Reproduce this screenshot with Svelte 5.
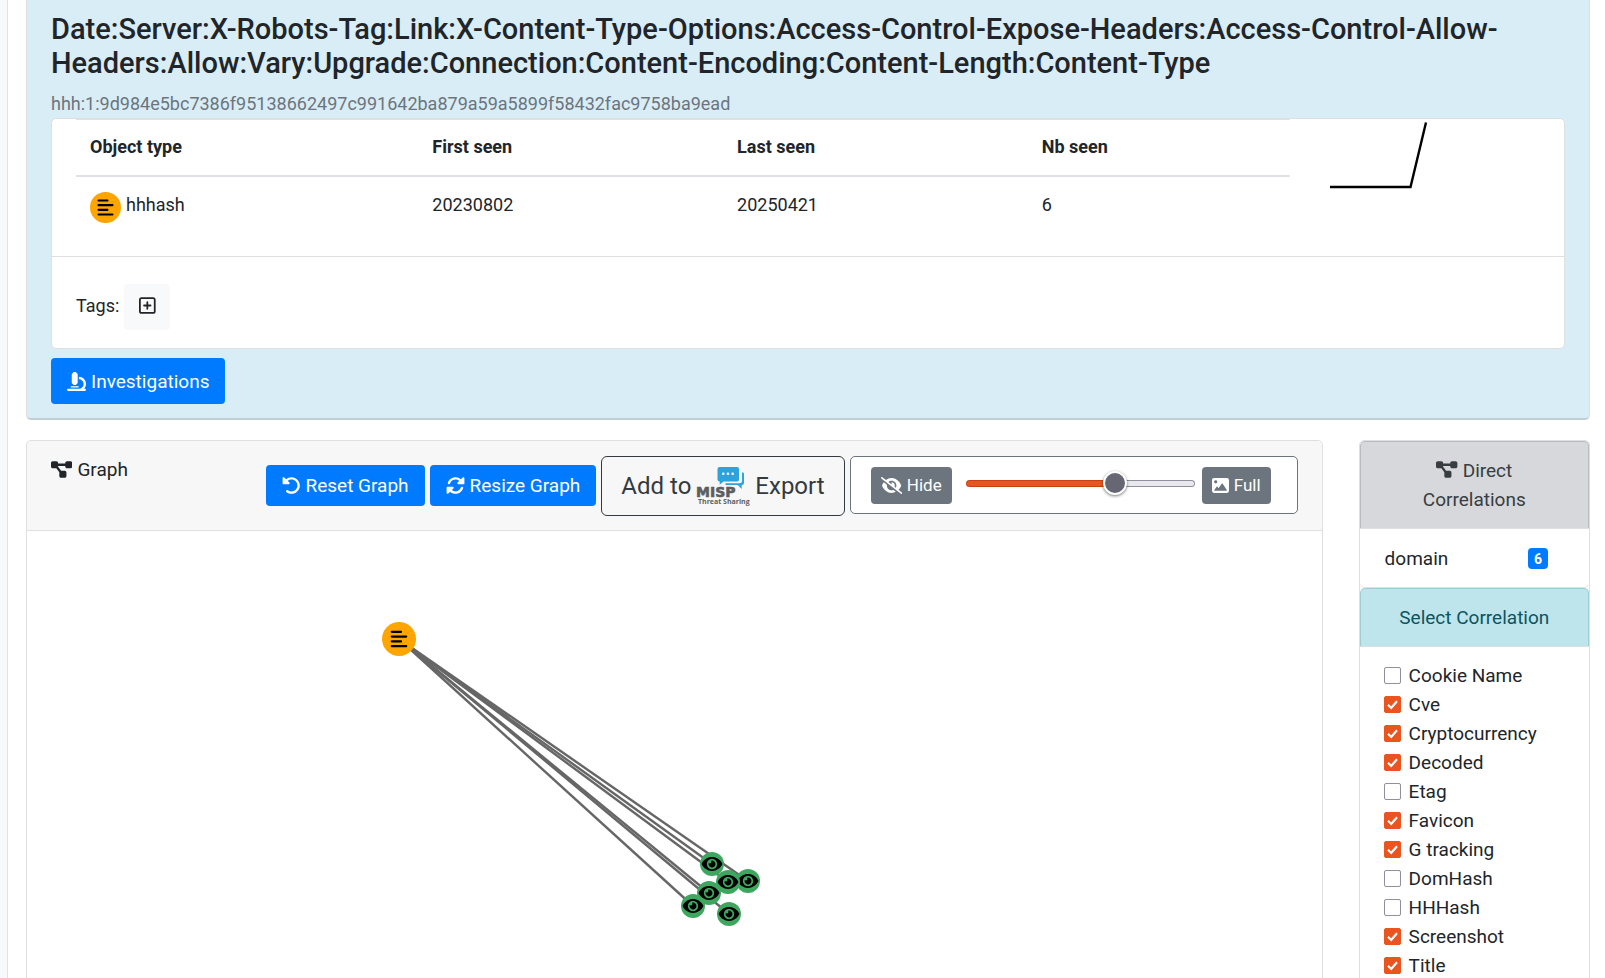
<script>
  const icons = {
    diagram: [576, 'M0 80C0 53.5 21.5 32 48 32h96c26.5 0 48 21.5 48 48V96H384V80c0-26.5 21.5-48 48-48h96c26.5 0 48 21.5 48 48v96c0 26.5-21.5 48-48 48H432c-26.5 0-48-21.5-48-48V160H192v16c0 1.7-.1 3.4-.3 5L272 288h96c26.5 0 48 21.5 48 48v96c0 26.5-21.5 48-48 48H272c-26.5 0-48-21.5-48-48V336c0-1.7 .1-3.4 .3-5L144 224H48c-26.5 0-48-21.5-48-48V80z'],
    microscope: [512, 'M160 32c0-17.7 14.3-32 32-32h32c17.7 0 32 14.3 32 32c17.7 0 32 14.3 32 32V288c0 17.7-14.3 32-32 32c0 17.7-14.3 32-32 32H192c-17.7 0-32-14.3-32-32c-17.7 0-32-14.3-32-32V64c0-17.7 14.3-32 32-32zM32 448H320c70.7 0 128-57.3 128-128s-57.3-128-128-128V128c106 0 192 86 192 192c0 49.2-18.5 94-48.9 128H480c17.7 0 32 14.3 32 32s-14.3 32-32 32H320 32c-17.7 0-32-14.3-32-32s14.3-32 32-32zm80-64H304c8.8 0 16 7.2 16 16s-7.2 16-16 16H112c-8.8 0-16-7.2-16-16s7.2-16 16-16z'],
    undo: [512, 'M480 256c0 123.4-100.5 223.9-223.9 223.9c-48.84 0-95.17-15.58-134.2-44.86c-14.12-10.59-16.97-30.66-6.375-44.81c10.59-14.12 30.62-16.94 44.81-6.375c27.84 20.91 61 31.94 95.88 31.94C344.3 415.8 416 344.1 416 256s-71.69-159.8-159.8-159.8c-37.46 0-73.09 13.49-101.3 36.64l45.12 45.14c17.01 17.02 4.955 46.1-19.1 46.1H35.17C24.58 224.1 16 215.5 16 204.9V59.04c0-24.04 29.07-36.08 46.07-19.07l47.6 47.63C149.9 52.71 201.5 32.11 256.1 32.11C379.5 32.11 480 132.6 480 256z'],
    sync: [512, 'M449.9 39.96l-48.5 48.53C362.5 53.19 311.4 32 256 32C161.5 32 78.59 92.34 49.58 182.2c-5.438 16.81 3.797 34.88 20.61 40.28c16.97 5.5 34.86-3.812 40.3-20.59C130.9 138.5 189.4 96 256 96c37.96 0 73 14.18 100.2 37.8L311.1 178C295.1 194.8 306.8 223.4 330.4 224h146.9C487.7 223.7 496 215.3 496 204.9V59.04C496 34.99 466.9 22.95 449.9 39.96zM441.8 289.6c-16.94-5.438-34.88 3.812-40.3 20.59C381.1 373.5 322.6 416 256 416c-37.96 0-73-14.18-100.2-37.8L200 334C216.9 317.2 205.2 288.6 181.6 288H34.66C24.32 288.3 16 296.7 16 307.1v145.9c0 24.04 29.07 36.08 46.07 19.07l48.5-48.53C149.5 458.8 200.6 480 255.1 480c94.45 0 177.4-60.34 206.4-150.2C467.9 313 458.6 294.1 441.8 289.6z'],
    eyeSlash: [640, 'M38.8 5.1C28.4-3.1 13.3-1.2 5.1 9.2S-1.2 34.7 9.2 42.9l592 464c10.4 8.2 25.5 6.3 33.7-4.1s6.3-25.5-4.1-33.7L525.6 386.7c39.6-40.6 66.4-86.1 79.9-118.4c3.3-7.9 3.3-16.7 0-24.6c-14.9-35.7-46.2-87.7-93-131.1C465.5 68.8 400.8 32 320 32c-68.2 0-125 26.3-169.3 60.8L38.8 5.1zM223.1 149.5C248.6 126.2 282.7 112 320 112c79.5 0 144 64.5 144 144c0 24.9-6.3 48.3-17.4 68.7L408 294.5c8.4-19.3 10.6-41.4 4.8-63.3c-11.1-41.5-47.8-69.4-88.6-71.1c-5.8-.2-9.2 6.1-7.4 11.7c2.1 6.4 3.3 13.2 3.3 20.3c0 10.2-2.4 19.8-6.6 28.3l-90.3-70.8zM373 389.9c-16.4 6.5-34.3 10.1-53 10.1c-79.5 0-144-64.5-144-144c0-6.9 .5-13.6 1.4-20.2L83.1 161.5C60.3 191.2 44 220.8 34.5 243.7c-3.3 7.9-3.3 16.7 0 24.6c14.9 35.7 46.2 87.7 93 131.1C174.5 443.2 239.2 480 320 480c47.8 0 89.9-12.9 126.2-32.5L373 389.9z'],
    image: [512, 'M447.1 32h-384C28.64 32-.0091 60.65-.0091 96v320c0 35.35 28.65 64 63.1 64h384c35.35 0 64-28.65 64-64V96C511.1 60.65 483.3 32 447.1 32zM111.1 96c26.51 0 48 21.49 48 48S138.5 192 111.1 192s-48-21.49-48-48S85.48 96 111.1 96zM446.1 407.6C443.3 412.8 437.9 416 432 416H82.01c-6.021 0-11.53-3.379-14.26-8.75c-2.73-5.367-2.215-11.81 1.334-16.68l70-96C142.1 290.4 146.9 288 152 288s9.916 2.441 12.93 6.574l32.46 44.51l93.3-139.1C293.7 194.7 298.7 192 304 192s10.35 2.672 13.31 7.125l128 192C448.6 396 448.9 402.3 446.1 407.6z'],
    plusSquare: [448, 'M64 80c-8.8 0-16 7.2-16 16V416c0 8.8 7.2 16 16 16H384c8.8 0 16-7.2 16-16V96c0-8.8-7.2-16-16-16H64zM0 96C0 60.7 28.7 32 64 32H384c35.3 0 64 28.7 64 64V416c0 35.3-28.7 64-64 64H64c-35.3 0-64-28.7-64-64V96zM200 344V280H136c-13.3 0-24-10.7-24-24s10.7-24 24-24h64V168c0-13.3 10.7-24 24-24s24 10.7 24 24v64h64c13.3 0 24 10.7 24 24s-10.7 24-24 24H248v64c0 13.3-10.7 24-24 24s-24-10.7-24-24z'],
  };
  const eyePath = 'M572.52 241.4C518.29 135.59 410.93 64 288 64S57.68 135.64 3.48 241.41a32.35 32.35 0 0 0 0 29.19C57.71 376.41 165.07 448 288 448s230.32-71.64 284.52-177.41a32.35 32.35 0 0 0 0-29.19zM288 400a144 144 0 1 1 144-144 143.93 143.93 0 0 1-144 144zm0-240a95.31 95.31 0 0 0-25.31 3.79 47.85 47.85 0 0 1-66.9 66.9A95.78 95.78 0 1 0 288 160z';

  const root = { x: 372, y: 108 };
  const domains = [
    { x: 721, y: 350 },
    { x: 666, y: 375 },
    { x: 702, y: 383 },
    { x: 701, y: 351 },
    { x: 682, y: 362 },
    { x: 685, y: 333 },
  ];

  let correlations = $state([
    { name: 'Cookie Name', on: false },
    { name: 'Cve', on: true },
    { name: 'Cryptocurrency', on: true },
    { name: 'Decoded', on: true },
    { name: 'Etag', on: false },
    { name: 'Favicon', on: true },
    { name: 'G tracking', on: true },
    { name: 'DomHash', on: false },
    { name: 'HHHash', on: false },
    { name: 'Screenshot', on: true },
    { name: 'Title', on: true },
  ]);
  let blur = $state(67);
</script>

{#snippet icon(name)}
  <svg class="icon" viewBox="0 0 {icons[name][0]} 512" aria-hidden="true"><path d={icons[name][1]} /></svg>
{/snippet}

{#snippet bars()}
  <g stroke="#000" stroke-width="2.2" stroke-linecap="round">
    <path d="M-7.2 -7.2H2 M-7.2 -2.4H7.2 M-7.2 2.4H2 M-7.2 7.2H7.2" />
  </g>
{/snippet}

<div class="page">
  <div class="sidebar"></div>
  <main>
    <section class="summary">
      <h3>Date:Server:X-Robots-Tag:Link:X-Content-Type-Options:Access-Control-Expose-Headers:Access-Control-Allow-Headers:Allow:Vary:Upgrade:Connection:Content-Encoding:Content-Length:Content-Type</h3>
      <div class="hash">hhh:1:9d984e5bc7386f95138662497c991642ba879a59a5899f58432fac9758ba9ead</div>
      <div class="details">
        <div class="seen">
          <table>
            <thead>
              <tr><th class="type">Object type</th><th class="date">First seen</th><th class="date">Last seen</th><th>Nb seen</th></tr>
            </thead>
            <tbody>
              <tr>
                <td>
                  <span class="object">
                    <svg class="badge-icon" viewBox="-16 -16 32 32" aria-hidden="true"><circle r="16" fill="#ffa500" />{@render bars()}</svg>
                    hhhash
                  </span>
                </td>
                <td>20230802</td>
                <td>20250421</td>
                <td>6</td>
              </tr>
            </tbody>
          </table>
          <svg class="spark" viewBox="0 0 100 80" aria-hidden="true"><path d="M0 68H80.5L96 3.500" fill="none" stroke="#000" stroke-width="2.4" /></svg>
        </div>
        <div class="tags">
          <span>Tags:</span>
          <button class="add-tag" aria-label="Add tag">{@render icon('plusSquare')}</button>
        </div>
      </div>
      <button class="primary large">{@render icon('microscope')}Investigations</button>
    </section>

    <div class="columns">
      <section class="graph">
        <header>
          <div class="title">{@render icon('diagram')}Graph</div>
          <div class="tools">
            <button class="primary">{@render icon('undo')}Reset Graph</button>
            <button class="primary">{@render icon('sync')}Resize Graph</button>
            <button class="misp">
              Add to
              <svg class="misp-logo" viewBox="0 0 54 40" aria-hidden="true">
                <path d="M46 6.500h.8q1.200 0 1.200 1.200v9.300q0 2-2 2h-.3v4l-4-4H29.500v-1.800H43.500q2.500 0 2.500-2.500z" fill="#2fa1db" />
                <path d="M23.500 1h17.500q2 0 2 2v10.500q0 2-2 2H27.500l-3.800 3.300v-3.300q-2.200 0-2.200-2V3q0-2 2-2z" fill="#2fa1db" />
                <g fill="#fff"><circle cx="27.300" cy="7.700" r="1.300" /><circle cx="32" cy="7.700" r="1.300" /><circle cx="36.700" cy="7.700" r="1.300" /></g>
                <text class="misp-name" x="0" y="31">MISP</text>
                <text class="misp-sub" x="2" y="38">Threat Sharing</text>
              </svg>
              Export
            </button>
            <div class="blur">
              <button class="secondary">{@render icon('eyeSlash')}Hide</button>
              <input type="range" min="0" max="100" bind:value={blur} aria-label="Image blur" style="--fill: {blur}%" />
              <button class="secondary">{@render icon('image')}Full</button>
            </div>
          </div>
        </header>
        <svg class="canvas" role="img" aria-label="Correlation graph">
          <g stroke="#666" stroke-width="2.4">
            {#each domains as d}<line x1={root.x} y1={root.y} x2={d.x} y2={d.y} />{/each}
          </g>
          {#each domains as d}
            <g transform="translate({d.x} {d.y})">
              <circle r="12" fill="#3da760" />
              <path d={eyePath} transform="scale(0.036) translate(-288 -256)" />
            </g>
          {/each}
          <g transform="translate({root.x} {root.y})">
            <circle r="17" fill="#ffa500" />
            {@render bars()}
          </g>
        </svg>
      </section>

      <aside>
        <div class="direct">{@render icon('diagram')}Direct Correlations</div>
        <a class="relation" href="#domain"><span>domain</span><span class="count">6</span></a>
        <div class="select-title">Select Correlation</div>
        <div class="options">
          {#each correlations as c}
            <label><input type="checkbox" bind:checked={c.on} />{c.name}</label>
          {/each}
        </div>
      </aside>
    </div>
  </main>
</div>

<style>
  :global(body) { margin: 0; background: #fff; }
  .page, .page * { box-sizing: border-box; }
  .page {
    display: flex;
    height: 100vh;
    overflow: hidden;
    color: #212529;
    font: 19px/29px Roboto, "Liberation Sans", sans-serif;
  }
  .sidebar { flex: 0 0 8px; background: #f8f9fa; border-right: 1px solid #dee2e6; }
  main { flex: 1; min-width: 0; padding: 0 15px 0 18px; }
  button { font: inherit; cursor: pointer; }
  .icon { height: 1em; fill: currentColor; flex: none; }

  .summary {
    padding: 12px 24px 14px;
    background: #d9edf7;
    border: 1px solid #dfdfdf;
    border-top: 0;
    border-bottom: 2px solid #c3ced4;
    border-radius: 0 0 5px 5px;
  }
  h3 { margin: 0; font-size: 29px; line-height: 34px; font-weight: 500; }
  .hash { margin-top: 10px; font-size: 18px; line-height: 28px; color: #6c757d; }
  .details { background: #fff; border: 1px solid #dfdfdf; border-radius: 5px; }
  .seen {
    display: grid;
    grid-template-columns: 1214fr 250fr;
    padding: 0 24px 20px;
    border-bottom: 1px solid #dfdfdf;
  }
  table { width: 100%; table-layout: fixed; border-collapse: collapse; font-size: 18px; }
  th, td { padding: 13px 14px 15px; text-align: left; vertical-align: top; border-top: 1px solid #dee2e6; }
  th { border-bottom: 2px solid #dee2e6; font-weight: 700; line-height: 27px; }
  td { line-height: 29px; border-top: 0; }
  .type { width: 28.2%; }
  .date { width: 25.1%; }
  .object { display: flex; gap: 5px; height: 31px; }
  .badge-icon { width: 31px; height: 31px; margin-top: 2px; }
  .spark { width: 100px; height: 80px; margin-left: 40px; }
  .tags { display: flex; align-items: center; gap: 5px; padding: 27px 24px 18px; font-size: 18px; }
  .tags span { margin-bottom: 3px; }
  .add-tag {
    display: flex;
    align-items: center;
    justify-content: center;
    width: 46px;
    height: 46px;
    padding: 0 0 3px;
    border: 0;
    border-radius: 4px;
    background: #f8f9fa;
    color: #212529;
    font-size: 19px;
  }

  .primary {
    display: flex;
    align-items: center;
    gap: 5px;
    height: 41px;
    padding: 0 16px;
    border: 0;
    border-radius: 4px;
    background: #007bff;
    color: #fff;
    white-space: nowrap;
  }
  .large { height: 46px; margin-top: 9px; }

  .columns { display: flex; gap: 36px; margin-top: 20px; }
  .graph { flex: 1298; min-width: 0; border: 1px solid #dfdfdf; border-radius: 5px; }
  .graph header {
    display: flex;
    justify-content: space-between;
    padding: 15px 24px 14px;
    background: #f7f7f7;
    border-bottom: 1px solid #dfdfdf;
    border-radius: 5px 5px 0 0;
  }
  .title { display: flex; align-items: center; gap: 5px; height: 26px; }
  .tools { display: flex; align-items: flex-start; gap: 5px; }
  .tools > .primary { margin-top: 9px; }
  .misp {
    display: flex;
    align-items: center;
    gap: 5px;
    height: 60px;
    padding: 0 19px;
    border: 1px solid #343a40;
    border-radius: 6px;
    background: none;
    color: #343a40;
    font-size: 24px;
    white-space: nowrap;
  }
  .misp-logo { width: 54px; height: 40px; overflow: visible; }
  .misp-name { font: 700 14px "DejaVu Sans", sans-serif; fill: #5c5e60; stroke: #5c5e60; stroke-width: 0.6px; }
  .misp-sub { font: 700 7px "Open Sans", sans-serif; fill: #5c5e60; }
  .blur {
    display: flex;
    align-items: center;
    width: 448px;
    height: 58px;
    padding: 0 26px 0 20px;
    border: 1px solid #6c757d;
    border-radius: 5px;
    background: #fff;
  }
  .secondary {
    display: flex;
    align-items: center;
    gap: 5px;
    height: 37px;
    padding: 0 10px;
    border: 0;
    border-radius: 4px;
    background: #6c757d;
    color: #fff;
    font-size: 17px;
  }
  input[type="range"] {
    flex: 1;
    min-width: 0;
    height: 24px;
    margin: 0 7px 3px 14px;
    appearance: none;
    background: none;
  }
  input[type="range"]::-webkit-slider-runnable-track {
    height: 7px;
    border: 1px solid transparent;
    border-radius: 4px;
    background:
      linear-gradient(to right, #e95420 var(--fill), #e9e9ed var(--fill)) padding-box,
      linear-gradient(to right, #c8410f var(--fill), #8f8f9d var(--fill)) border-box;
  }
  input[type="range"]::-webkit-slider-thumb {
    appearance: none;
    width: 24px;
    height: 24px;
    margin-top: -10px;
    border: 2px solid #fff;
    border-radius: 50%;
    background: #676774;
    box-shadow: 0 1px 3px #0008;
  }
  .canvas { display: block; width: 100%; height: 600px; }

  aside { flex: 230; min-width: 0; border: 1px solid #dfdfdf; border-radius: 5px; }
  .direct, .select-title { padding: 14px 24px; text-align: center; border: 1px solid; border-bottom: 0; border-radius: 5px 5px 0 0; }
  .direct { color: #383d41; background: #d6d8db; border-color: #b9bcc0; }
  .direct .icon { margin-right: 5px; vertical-align: -2px; }
  .relation {
    display: flex;
    align-items: center;
    justify-content: space-between;
    height: 60px;
    padding: 0 41px 0 25px;
    border: 1px solid #dfdfdf;
    border-width: 1px 0;
    border-radius: 0 0 5px 5px;
    color: #212529;
    text-decoration: none;
  }
  .count {
    width: 20px;
    height: 21px;
    border-radius: 4px;
    background: #007bff;
    color: #fff;
    font-size: 14px;
    font-weight: 700;
    line-height: 22px;
    text-align: center;
  }
  .select-title { color: #0c5460; background: #bee5eb; border-color: #9fcdd5; }
  .options { padding: 14px 24px; border-top: 1px solid #dfdfdf; }
  .options label { display: flex; align-items: center; gap: 8px; height: 29px; }
  input[type="checkbox"] {
    appearance: none;
    width: 17px;
    height: 17px;
    margin: 0;
    border: 1px solid #8f8f9d;
    border-radius: 2px;
    background: #fff;
  }
  input[type="checkbox"]:checked {
    border-color: #e95420;
    background: #e95420 url("data:image/svg+xml,%3Csvg xmlns='http://www.w3.org/2000/svg' viewBox='0 0 15 15'%3E%3Cpath d='M3 7.800L6.200 11L12 4.200' fill='none' stroke='%23fff' stroke-width='2.200'/%3E%3C/svg%3E") center / 15px 15px no-repeat;
  }
</style>
